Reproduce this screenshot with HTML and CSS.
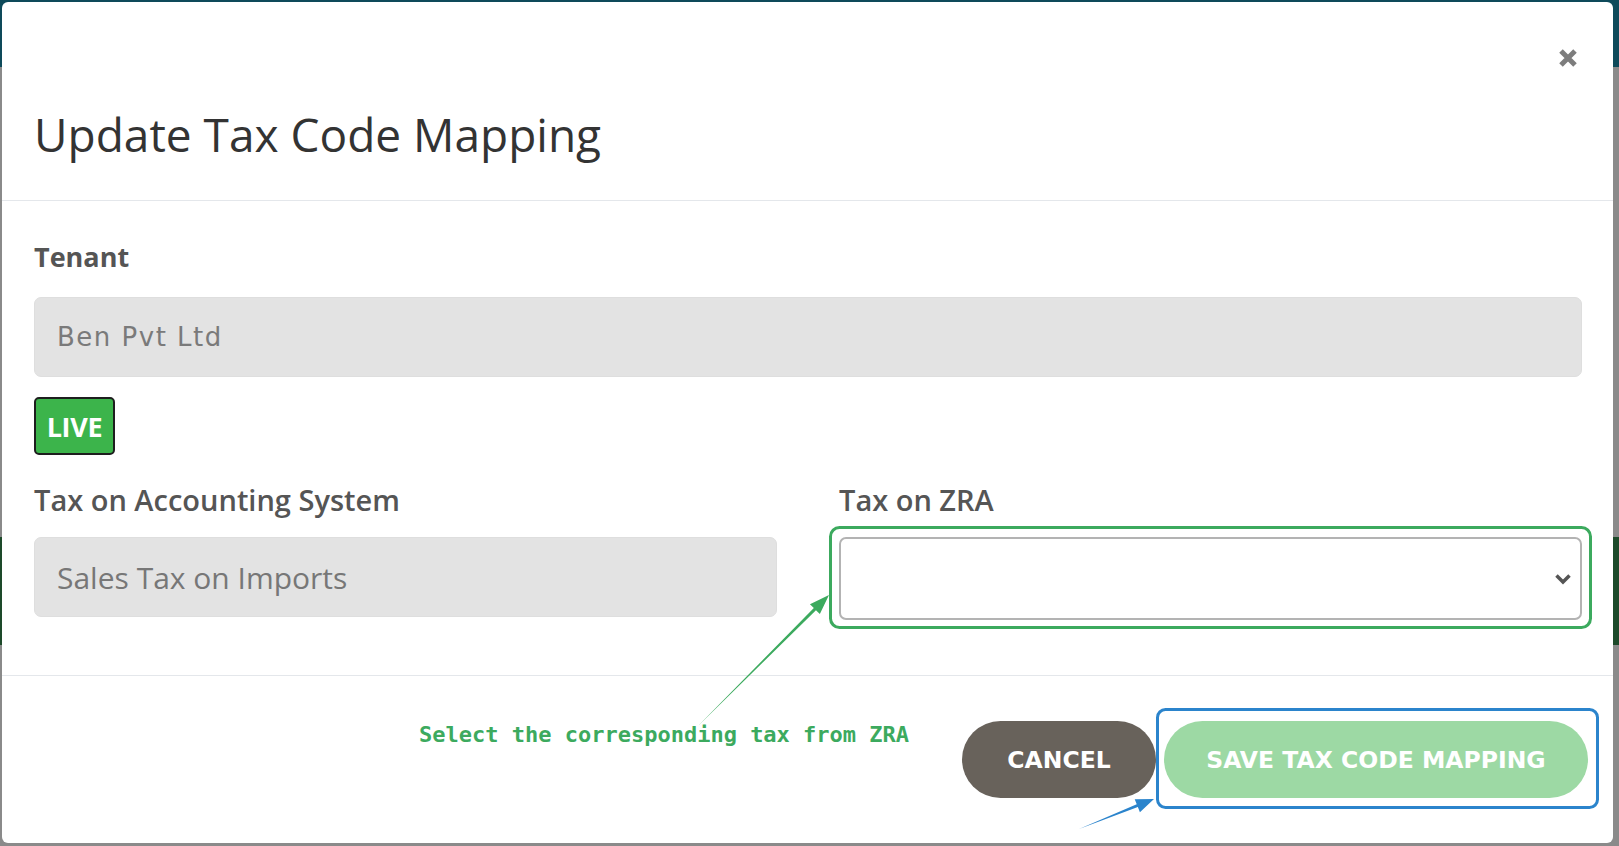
FILE: index.html
```html
<!DOCTYPE html>
<html lang="en">
<head>
<meta charset="utf-8">
<title>Update Tax Code Mapping</title>
<link rel="stylesheet" href="styles.css">
</head>
<body>
<div class="modal">
  <div class="modal-header">
    <h1 class="modal-title">Update Tax Code Mapping</h1>
    <button class="close-btn" aria-label="Close">
      <svg width="22" height="22" viewBox="0 0 22 22"><path d="M4 4 L18 18 M18 4 L4 18" stroke="#7d7d7d" stroke-width="5" stroke-linecap="butt"/></svg>
    </button>
  </div>
  <div class="modal-body">
    <label class="field-label bold">Tenant</label>
    <div class="input readonly wide-font">Ben Pvt Ltd</div>
    <span class="badge-live">LIVE</span>
    <div class="two-col">
      <div class="col">
        <label class="field-label">Tax on Accounting System</label>
        <div class="input readonly">Sales Tax on Imports</div>
      </div>
      <div class="col">
        <label class="field-label">Tax on ZRA</label>
        <div class="select">
          <svg width="18" height="12" viewBox="0 0 18 12"><path d="M2.5 2.5 L9 9 L15.5 2.5" fill="none" stroke="#555" stroke-width="3.5"/></svg>
        </div>
      </div>
    </div>
  </div>
  <div class="modal-footer">
    <span class="hint">Select the corresponding tax from ZRA</span>
    <button class="btn btn-cancel">CANCEL</button>
    <button class="btn btn-save">SAVE TAX CODE MAPPING</button>
  </div>
</div>
<svg class="annotations" width="1619" height="846" viewBox="0 0 1619 846">
  <rect x="830.5" y="527.5" width="760" height="100" rx="9" fill="none" stroke="#3caa5e" stroke-width="3"/>
  <rect x="1157.5" y="709.5" width="440" height="98" rx="8" fill="none" stroke="#2b84cc" stroke-width="3"/>
  <polygon points="698,726 815.96,610.16 819.85,614.05 829,595 809.95,604.15 813.84,608.04" fill="#3caa5e"/>
  <polygon points="1079,829 1137.86,807.09 1139.9,812.2 1154,799 1134.7,799.2 1136.74,804.31" fill="#2b84cc"/>
</svg>
</body>
</html>
```
FILE: styles.css
```css
html, body {
  margin: 0;
  padding: 0;
}
body {
  width: 1619px;
  height: 846px;
  overflow: hidden;
  background: linear-gradient(to bottom, #0e4a5a 0 67px, #8a8a8a 67px 537px, #1d4a2a 537px 645px, #8a8a8a 645px);
  font-family: "Open Sans", "Liberation Sans", sans-serif;
  position: relative;
}
.modal {
  margin: 2px 0 0 2px;
  width: 1611px;
  height: 841px;
  background: #fff;
  border-radius: 6px;
  display: flex;
  flex-direction: column;
  position: relative;
  box-sizing: border-box;
}
.modal-header {
  padding: 109px 32px 43px;
  border-bottom: 1px solid #e4e7eb;
  position: relative;
}
.modal-title {
  margin: 0;
  font-size: 46px;
  line-height: 46px;
  font-weight: 400;
  color: #333;
}
.close-btn {
  position: absolute;
  top: 45px;
  right: 34px;
  width: 22px;
  height: 22px;
  padding: 0;
  border: 0;
  background: none;
  display: flex;
}
.modal-body {
  padding: 38px 31px 55px 32px;
  display: flex;
  flex-direction: column;
  align-items: flex-start;
}
.field-label {
  display: block;
  font-size: 29px;
  line-height: 35px;
  font-weight: 600;
  color: #555;
  letter-spacing: 0;
}
.field-label.bold {
  font-weight: 700;
  font-size: 27px;
}
.input {
  box-sizing: border-box;
  width: 100%;
  height: 80px;
  margin-top: 23px;
  border-radius: 7px;
  display: flex;
  align-items: center;
  padding: 0 22px;
  font-size: 30px;
  color: #777;
}
.input.readonly {
  background: #e3e3e3;
  border: 1px solid #dedede;
}
.input.wide-font {
  font-family: "DejaVu Sans", sans-serif;
  font-size: 26px;
  letter-spacing: 1.5px;
  color: #7a7a7a;
}
.badge-live {
  margin-top: 20px;
  box-sizing: border-box;
  width: 81px;
  height: 58px;
  background: #3cb44b;
  border: 2px solid #1e1e1e;
  border-radius: 5px;
  color: #fff;
  font-weight: 700;
  font-size: 27px;
  display: flex;
  align-items: center;
  justify-content: center;
  letter-spacing: -0.3px;
}
.two-col {
  margin-top: 27px;
  width: 100%;
  display: grid;
  grid-template-columns: 1fr 1fr;
  column-gap: 62px;
  align-items: start;
}
.col .input {
  margin-top: 20px;
}
.select {
  margin-top: 20px;
  box-sizing: border-box;
  height: 83px;
  border: 2px solid #b3b3b3;
  border-radius: 7px;
  background: #fff;
  display: flex;
  align-items: center;
  justify-content: flex-end;
  padding-right: 8px;
}
.modal-footer {
  border-top: 1px solid #e4e7eb;
  padding: 45px 25px 45px 0;
  display: flex;
  align-items: center;
  justify-content: flex-end;
  gap: 8px;
  position: relative;
}
.hint {
  margin-right: auto;
  margin-left: 417px;
  margin-top: -50px;
  font-family: "DejaVu Sans Mono", "Liberation Mono", monospace;
  font-weight: 700;
  font-size: 22px;
  color: #3caa5e;
}
.btn {
  height: 77px;
  border: 0;
  border-radius: 39px;
  color: #fff;
  font-family: "DejaVu Sans", sans-serif;
  font-weight: 700;
  font-size: 23.5px;
  padding: 0;
}
.btn-cancel {
  width: 194px;
  background: #68625b;
}
.btn-save {
  width: 424px;
  background: #9dd9a4;
}
.annotations {
  position: absolute;
  left: 0;
  top: 0;
  pointer-events: none;
}
```
